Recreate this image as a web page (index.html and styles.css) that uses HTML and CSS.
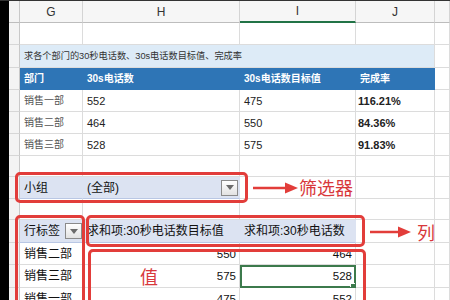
FILE: index.html
```html
<!DOCTYPE html>
<html lang="zh-CN">
<head>
<meta charset="utf-8">
<title>数据透视表</title>
<link rel="stylesheet" href="styles.css">
</head>
<body>
<div class="sheet">
  <div class="row h23 top">
    <div class="edge"></div>
    <div class="rh corner"></div>
    <div class="ch">G</div>
    <div class="ch">H</div>
    <div class="ch active">I</div>
    <div class="ch">J</div>
    <div class="ch"></div>
  </div>

  <div class="row h22">
    <div class="edge"></div><div class="rh"></div>
    <div class="c"></div><div class="c"></div><div class="c"></div><div class="c"></div><div class="c"></div>
  </div>

  <div class="row h23">
    <div class="edge"></div><div class="rh"></div>
    <div class="c question">求各个部门的30秒电话数、30s电话数目标值、完成率</div>
    <div class="c"></div>
  </div>

  <div class="row h22">
    <div class="edge"></div><div class="rh"></div>
    <div class="c th">部门</div>
    <div class="c th">30s电话数</div>
    <div class="c th">30s电话数目标值</div>
    <div class="c th">完成率</div>
    <div class="c"></div>
  </div>

  <div class="row h22">
    <div class="edge"></div><div class="rh"></div>
    <div class="c lbl">销售一部</div>
    <div class="c num">552</div>
    <div class="c num">475</div>
    <div class="c num bold">116.21%</div>
    <div class="c"></div>
  </div>
  <div class="row h22">
    <div class="edge"></div><div class="rh"></div>
    <div class="c lbl">销售二部</div>
    <div class="c num">464</div>
    <div class="c num">550</div>
    <div class="c num bold">84.36%</div>
    <div class="c"></div>
  </div>
  <div class="row h22">
    <div class="edge"></div><div class="rh"></div>
    <div class="c lbl">销售三部</div>
    <div class="c num">528</div>
    <div class="c num">575</div>
    <div class="c num bold">91.83%</div>
    <div class="c"></div>
  </div>

  <div class="row h21">
    <div class="edge"></div><div class="rh"></div>
    <div class="c"></div><div class="c"></div><div class="c"></div><div class="c"></div><div class="c"></div>
  </div>

  <div class="row h22">
    <div class="edge"></div><div class="rh"></div>
    <div class="c band pv">小组</div>
    <div class="c band pv">(全部)<span class="dd dd-filter"></span></div>
    <div class="c"></div><div class="c"></div><div class="c"></div>
  </div>

  <div class="row h21">
    <div class="edge"></div><div class="rh"></div>
    <div class="c"></div><div class="c"></div><div class="c"></div><div class="c"></div><div class="c"></div>
  </div>

  <div class="row h23">
    <div class="edge"></div><div class="rh"></div>
    <div class="c band pv tight">行标签<span class="dd"></span></div>
    <div class="c band pv">求和项:30秒电话数目标值</div>
    <div class="c band pv">求和项:30秒电话数</div>
    <div class="c"></div><div class="c"></div>
  </div>

  <div class="row h22">
    <div class="edge"></div><div class="rh"></div>
    <div class="c pv">销售二部</div>
    <div class="c pv right">550</div>
    <div class="c pv right">464</div>
    <div class="c"></div><div class="c"></div>
  </div>
  <div class="row h23">
    <div class="edge"></div><div class="rh"></div>
    <div class="c pv">销售三部</div>
    <div class="c pv right">575</div>
    <div class="c pv right selected">528</div>
    <div class="c"></div><div class="c"></div>
  </div>
  <div class="row h22">
    <div class="edge"></div><div class="rh"></div>
    <div class="c pv">销售一部</div>
    <div class="c pv right">475</div>
    <div class="c pv right">552</div>
    <div class="c"></div><div class="c"></div>
  </div>

  <div class="annot">
    <div class="rbox box-filter"></div>
    <div class="rbox box-rows"></div>
    <div class="rbox box-cols"></div>
    <div class="rbox box-vals"></div>
    <svg class="arrows" width="450" height="300" viewBox="0 0 450 300">
      <line x1="253" y1="188" x2="288" y2="188" stroke="#e23d3a" stroke-width="2.5"/>
      <polygon points="285,182.5 298,188 285,193.5" fill="#e23d3a"/>
      <line x1="370" y1="232" x2="401" y2="232" stroke="#e23d3a" stroke-width="2.5"/>
      <polygon points="398,226.5 411,232 398,237.5" fill="#e23d3a"/>
    </svg>
    <span class="note note-filter">筛选器</span>
    <span class="note note-col">列</span>
    <span class="note note-val">值</span>
  </div>
</div>
</body>
</html>
```

FILE: styles.css
```css
* { box-sizing: border-box; }
html, body { margin: 0; padding: 0; background: #fff; }
body {
  width: 450px;
  height: 300px;
  overflow: hidden;
  font-family: "Liberation Sans", "Noto Sans CJK SC", sans-serif;
  color: #222;
}
.sheet { position: relative; width: 450px; height: 300px; overflow: hidden; }

.row {
  display: grid;
  grid-template-columns: 9px 11px 63px 157px 116px 79px 15px;
}
.h21 { height: 21px; }
.h22 { height: 22px; }
.h23 { height: 23px; }

.edge { background: #000; }
.rh {
  background: #f3f3f3;
  border-right: 1px solid #c8c8c8;
  border-bottom: 1px solid #d6d6d6;
}
.top { border-top: 1px solid #333; }
.corner { border-bottom-color: #bdbdbd; }

.ch {
  background: #f6f6f6;
  border-right: 1px solid #d4d4d4;
  border-bottom: 1px solid #bdbdbd;
  display: flex;
  align-items: center;
  justify-content: center;
  font-size: 12px;
  color: #333;
}
.ch.active {
  border-bottom: 2px solid #217346;
}

.c {
  border-right: 1px solid #dcdcdc;
  border-bottom: 1px solid #dcdcdc;
  display: flex;
  align-items: center;
  padding: 0 3px;
  white-space: nowrap;
  overflow: hidden;
  font-size: 11px;
  line-height: 14px;
}

.question {
  grid-column: span 4;
  background: #ddebf7;
  border-right-color: #dcdcdc;
  border-bottom-color: #dcdcdc;
  font-size: 9.2px;
  color: #333;
  padding-left: 4px;
}

.th {
  background: #2e75b6;
  border-color: #2e75b6;
  color: #fff;
  font-weight: bold;
  font-size: 10px;
  padding-left: 4px;
}
.th:first-of-type { }

.lbl { font-size: 10px; color: #555; padding-left: 4px; }
.num { font-size: 11px; color: #222; padding-left: 4px; }
.num.bold { font-weight: bold; padding-left: 2px; }

.pv { font-size: 12px; color: #111; padding-left: 4px; }
.pv.right { justify-content: flex-end; font-size: 11.5px; padding-right: 3px; }
.band {
  background: #dce3f2;
  border-right-color: #dce3f2;
  border-bottom: 1px solid #b9c7e4;
}
.tight { padding-right: 0; }

.dd {
  width: 17px;
  height: 16px;
  margin-left: auto;
  border: 1px solid #8a8a8a;
  background: linear-gradient(#ffffff, #e2e2e2);
  display: flex;
  align-items: center;
  justify-content: center;
  flex: none;
}
.dd::before {
  content: "";
  border-left: 4px solid transparent;
  border-right: 4px solid transparent;
  border-top: 5px solid #6b6b6b;
}
.dd-filter { margin-right: -2px; }

.selected {
  position: relative;
  outline: 2px solid #3c7a4c;
  outline-offset: -2px;
}
.selected::after {
  content: "";
  position: absolute;
  right: -2px;
  bottom: -3px;
  width: 5px;
  height: 5px;
  background: #3c7a4c;
  border: 1px solid #fff;
}

/* annotation overlay */
.annot { position: absolute; left: 0; top: 0; width: 450px; height: 300px; pointer-events: none; }
.rbox {
  position: absolute;
  border: 3px solid #e23d3a;
  border-radius: 5px;
}
.box-filter { left: 15px; top: 172px; width: 233px; height: 31px; }
.box-rows { left: 15px; top: 215px; width: 70px; height: 100px; }
.box-cols { left: 86px; top: 215px; width: 279px; height: 32px; }
.box-vals { left: 88px; top: 249px; width: 278px; height: 70px; }
.arrows { position: absolute; left: 0; top: 0; }

.note {
  position: absolute;
  font-family: "Noto Sans CJK SC", sans-serif;
  font-size: 18px;
  line-height: 20px;
  color: #d8383b;
}
.note-filter { left: 299px; top: 177px; }
.note-col { left: 417px; top: 222px; }
.note-val { left: 140px; top: 266px; }
```
